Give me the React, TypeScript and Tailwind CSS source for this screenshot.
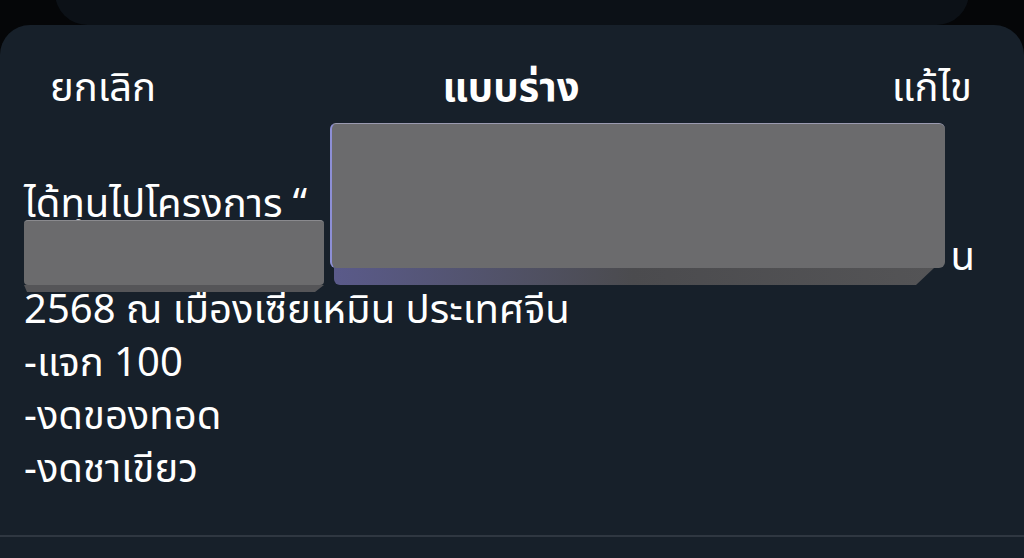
export default function App() {
  const lines = [
    "2568 ณ เมืองเซียเหมิน ประเทศจีน",
    "-แจก 100",
    "-งดของทอด",
    "-งดชาเขียว",
  ];

  return (
    <div className="h-[558px] w-[1024px] overflow-hidden bg-[#050608] font-['Noto_Sans_Thai','Noto_Sans',sans-serif] text-white">
      {/* sheet stacked behind */}
      <div className="mx-[55px] -mt-[40px] h-[65px] rounded-[44px] bg-[#0c1117]" />

      {/* main sheet */}
      <div className="h-[533px] rounded-t-[30px] bg-[#17202a]">
        <div className="grid grid-cols-3 items-center pl-[50px] pr-[52px] pt-[42px] text-[40px] leading-[44px]">
          <span>ยกเลิก</span>
          <span className="justify-self-center font-bold">แบบร่าง</span>
          <span className="justify-self-end">แก้ไข</span>
        </div>

        <div className="relative mt-[68px] px-[24px] text-[40px] leading-[53px]">
          <div>ได้ทุนไปโครงการ “</div>
          <div className="pr-[25px] text-right">น</div>
          {lines.map((l) => (
            <div key={l}>{l}</div>
          ))}

          {/* redaction boxes over the text */}
          <div className="absolute left-[330px] top-[-56px] h-[162px] w-[615px]">
            <div className="h-[145px] rounded-[6px] border-l-2 border-t border-l-[#8d8fd6] border-t-[#9a9ab0] bg-[#6b6b6d]" />
            <div className="ml-[4px] h-[17px] w-[600px] rounded-bl-[6px] bg-gradient-to-r from-[#5a5a8a] via-[#4b4b4e] to-[#545456] [clip-path:polygon(0_0,100%_0,97%_100%,0_100%)]" />
          </div>
          <div className="absolute left-[24px] top-[41px] h-[72px] w-[300px]">
            <div className="h-[65px] rounded-[4px] border-t border-t-[#8a8a8e] bg-[#6b6b6d]" />
            <div className="h-[7px] bg-[#555558] [clip-path:polygon(0_0,100%_0,97%_100%,1%_100%)]" />
          </div>
        </div>

        <div className="mt-[38px] h-[2px] bg-[#2f3741]" />
      </div>
    </div>
  );
}
